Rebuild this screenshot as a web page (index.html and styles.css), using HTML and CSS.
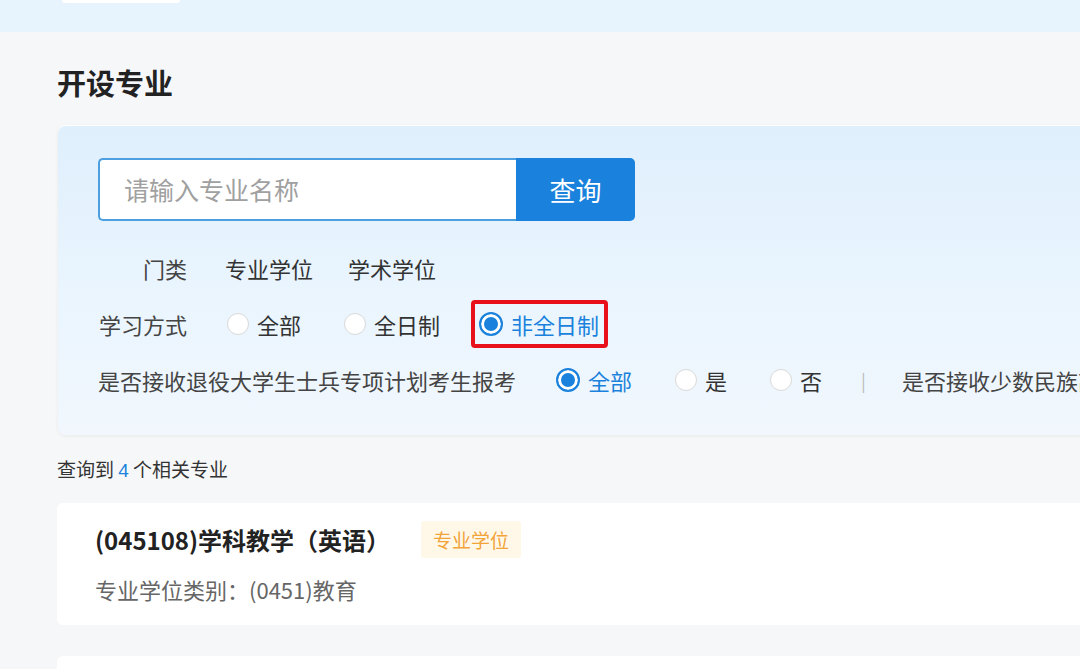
FILE: index.html
```html
<!DOCTYPE html>
<html lang="zh">
<head>
<meta charset="utf-8">
<link rel="stylesheet" href="styles.css">
</head>
<body>
<div class="topband"><div class="tab"></div></div>
<main class="page">
  <h2 class="title">开设专业</h2>
  <section class="panel">
    <div class="search">
      <div class="input">请输入专业名称</div>
      <div class="btn">查询</div>
    </div>
    <div class="row">
      <span class="label">门类</span>
      <span class="tabopt">专业学位</span>
      <span class="tabopt">学术学位</span>
    </div>
    <div class="row">
      <span class="label">学习方式</span>
      <span class="opt"><i class="radio"></i>全部</span>
      <span class="opt"><i class="radio"></i>全日制</span>
      <span class="opt on hl"><i class="radio"></i>非全日制</span>
    </div>
    <div class="row">
      <span class="label long">是否接收退役大学生士兵专项计划考生报考</span>
      <span class="opt on"><i class="radio"></i>全部</span>
      <span class="opt"><i class="radio"></i>是</span>
      <span class="opt"><i class="radio"></i>否</span>
      <span class="sep">|</span>
      <span class="label long clip">是否接收少数民族高层次骨干人才计划考生报考</span>
    </div>
  </section>
  <p class="count">查询到 <b>4</b> 个相关专业</p>
  <article class="card">
    <div class="card-head">
      <h3>(045108)学科教学（英语）</h3>
      <span class="tag">专业学位</span>
    </div>
    <p class="sub">专业学位类别：(0451)教育</p>
  </article>
  <article class="card"></article>
</main>
</body>
</html>
```

FILE: styles.css
```css
html, body {
  margin: 0;
  padding: 0;
}
body {
  width: 1080px;
  height: 669px;
  overflow: hidden;
  background: #f6f7f9;
  font-family: "Noto Sans CJK SC", "Liberation Sans", sans-serif;
  color: #333;
}
.topband {
  height: 32px;
  background: #e7f3fd;
}
.tab {
  width: 118px;
  height: 3px;
  margin-left: 62px;
  background: #fff;
  border-radius: 0 0 4px 4px;
}
.page {
  padding-left: 57px;
  width: 1023px;
  overflow: hidden;
}
.title {
  margin: 0;
  padding-top: 29px;
  height: 64px;
  font-size: 29px;
  line-height: 42px;
  font-weight: 700;
  color: #222;
}
.panel {
  margin-left: 1px;
  margin-right: -20px;
  height: 310px;
  box-sizing: border-box;
  padding: 32px 0 0 40px;
  background: linear-gradient(180deg, #dfeffc 0%, #eaf5fe 55%, #f1f7fd 100%);
  border-top: 1px solid #fff;
  border-radius: 8px 0 0 8px;
  box-shadow: 0 1px 4px rgba(0, 0, 0, 0.06);
  overflow: hidden;
}
.search {
  display: flex;
  width: 537px;
  height: 63px;
}
.input {
  flex: 1;
  box-sizing: border-box;
  border: 2px solid #4d9fe0;
  border-right: none;
  border-radius: 5px 0 0 5px;
  background: #fff;
  padding-left: 24px;
  font-size: 25px;
  line-height: 59px;
  color: #a0a0a0;
}
.btn {
  width: 119px;
  background: #1a82dc;
  color: #fff;
  border-radius: 0 5px 5px 0;
  font-size: 26px;
  line-height: 63px;
  text-align: center;
}
.row {
  display: flex;
  align-items: center;
  height: 56px;
  font-size: 22px;
  white-space: nowrap;
}
.row:nth-child(2) {
  margin-top: 19px;
}
.label {
  width: 89px;
  text-align: right;
  color: #444;
  flex: none;
  margin-right: 40px;
}
.label.long {
  width: auto;
}
.tabopt {
  margin-left: -2px;
  margin-right: 37px;
  color: #333;
}
.opt {
  display: flex;
  align-items: center;
  margin-right: 43px;
  color: #333;
  box-sizing: border-box;
}
.radio {
  width: 22px;
  height: 22px;
  box-sizing: border-box;
  border: 1px solid #d9d9d9;
  border-radius: 50%;
  background: #fff;
  margin-right: 8px;
  flex: none;
}
.opt.on {
  color: #1a82dc;
}
.opt.on .radio {
  width: 24px;
  height: 24px;
  border: 2px solid #1a82dc;
  box-shadow: inset 0 0 0 3px #fff;
  background: #1a82dc;
}
.opt.hl {
  margin-left: -12px;
  padding: 0 5px 0 4px;
  height: 48px;
  border: 4px solid #e8101a;
  border-radius: 4px;
}
.sep {
  color: #bbb;
  font-size: 18px;
  margin-right: 36px;
  margin-left: -4px;
}
.clip {
  flex: 1;
  min-width: 0;
  overflow: hidden;
  margin-right: 0;
}
.count {
  margin: 21px 0 0;
  height: 26px;
  font-size: 19px;
  line-height: 26px;
  color: #333;
}
.count b {
  font-weight: 400;
  color: #1a82dc;
  font-family: "Liberation Sans", sans-serif;
}
.card {
  margin-top: 21px;
  margin-right: -20px;
  height: 122px;
  box-sizing: border-box;
  padding: 17px 0 0 38px;
  background: #fff;
  border-radius: 6px 0 0 6px;
}
.card + .card {
  margin-top: 31px;
}
.card-head {
  display: flex;
  align-items: center;
  height: 38px;
}
.card-head h3 {
  margin: 0 31px 0 0;
  font-size: 24px;
  font-weight: 700;
  color: #222;
}
.tag {
  padding: 0 12px;
  height: 37px;
  line-height: 37px;
  background: #fff8e8;
  color: #f2a33a;
  font-size: 19px;
  border-radius: 3px;
}
.sub {
  margin: 16px 0 0;
  font-size: 22px;
  line-height: 30px;
  color: #666;
}
```
